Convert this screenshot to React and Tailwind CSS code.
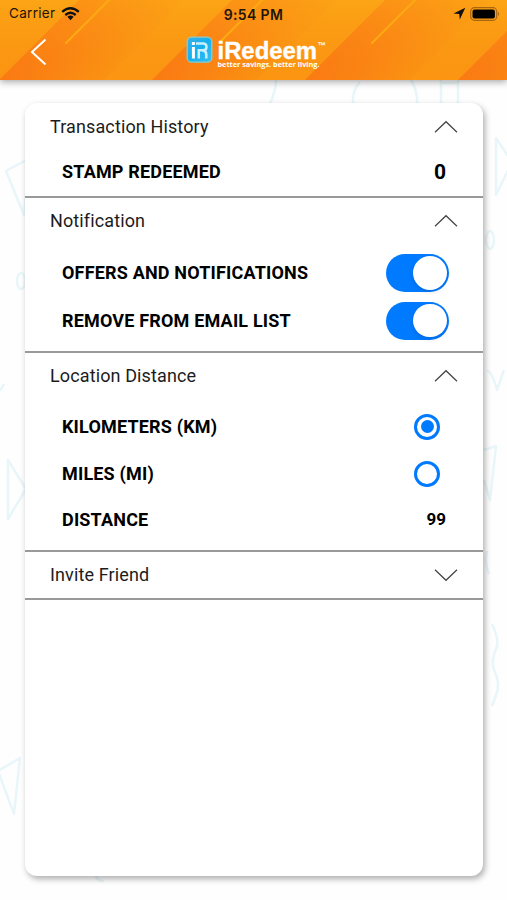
import React, { useState } from 'react';

const Chevron = ({ open }) => (
  <svg width="24" height="14" viewBox="0 0 24 14" fill="none" stroke="#444" strokeWidth="1.2">
    <path d={open ? 'M1 12.3 L12 1.7 L23 12.3' : 'M1 1.7 L12 12.3 L23 1.7'} />
  </svg>
);

const Toggle = ({ on, label, onClick }) => (
  <button
    role="switch"
    aria-checked={on}
    aria-label={label}
    onClick={onClick}
    className={`mr-[0.5px] flex h-[38px] w-[62.5px] items-center rounded-full px-[2px] ${
      on ? 'justify-end bg-[#007aff]' : 'justify-start bg-gray-200'
    }`}
  >
    <span className="h-[33.5px] w-[33.5px] rounded-full bg-white shadow-[0_2px_4px_rgba(0,0,0,0.12)]" />
  </button>
);

const Radio = ({ checked, label, onClick }) => (
  <button
    role="radio"
    aria-checked={checked}
    aria-label={label}
    onClick={onClick}
    className="mr-[9px] flex h-[26px] w-[26px] items-center justify-center rounded-full border-[3px] border-[#007aff]"
  >
    {checked && <span className="h-[13px] w-[13px] rounded-full bg-[#007aff]" />}
  </button>
);

const Section = ({ title, open, onToggle, children }) => (
  <section className="border-b-2 border-[#999999]">
    <button onClick={onToggle} className="flex h-[46px] w-full items-center justify-between px-[25px]">
      <span className="pb-px text-[18px] tracking-[0.12px] text-[#1c1c1c]">{title}</span>
      <Chevron open={open} />
    </button>
    {open && children}
  </section>
);

const Row = ({ label, className, children }) => (
  <div className={`flex items-center justify-between pl-[37px] pr-[34px] ${className}`}>
    <span className="pb-px text-[18px] font-bold tracking-[0.18px] text-black">{label}</span>
    {children}
  </div>
);

const HeaderArt = () => (
  <svg className="absolute inset-0" width="507" height="80" viewBox="0 0 507 80">
    <defs>
      <linearGradient id="band" gradientUnits="userSpaceOnUse" x1="40" y1="40" x2="92" y2="92">
        <stop offset="0" stopColor="#fa7a13" />
        <stop offset="0.45" stopColor="#fa8513" />
        <stop offset="1" stopColor="#fa9812" />
      </linearGradient>
      <linearGradient id="glow" x1="0" y1="0" x2="0" y2="1">
        <stop offset="0" stopColor="#fdae18" stopOpacity="0.5" />
        <stop offset="1" stopColor="#fa7a12" stopOpacity="0.2" />
      </linearGradient>
    </defs>
    <rect width="507" height="80" fill="#fb9c12" />
    {[0, 153, 306, 459].map((x) => (
      <path key={x} d="M-1 80 L79 0 H184 L104 80 Z" fill="url(#band)" transform={`translate(${x} 0)`} />
    ))}
    <rect width="507" height="80" fill="url(#glow)" />
    {[0, 153, 306].map((x) => (
      <path
        key={x}
        d="M66 43 L109 0"
        stroke="#fca912"
        strokeWidth="2.2"
        strokeLinecap="round"
        transform={`translate(${x} 0)`}
      />
    ))}
  </svg>
);

// faint doodles around the card
const Doodles = () => (
  <svg
    className="absolute inset-0"
    width="507"
    height="900"
    viewBox="0 0 507 900"
    fill="none"
    stroke="#e9f6f9"
    strokeWidth="2.5"
    strokeLinejoin="round"
  >
    <path d="M30 158 L6 171 L24 215 Z" />
    <ellipse cx="21" cy="281" rx="4" ry="8" />
    <path d="M0 391 L4 384" />
    <path d="M8 460 L26 489 L8 519 Z" />
    <path d="M-2 771 L20 758 L14 814 Z" />
    <path d="M276 80 Q276 90 270 104" />
    <path d="M360 82 Q352 90 353 104" />
    <path d="M411 80 Q418 92 417 104" />
    <path d="M441 80 V104 M458 80 V104 M441 83 H458" />
    <path d="M496 138 L512 162 L496 195 Z" />
    <ellipse cx="490" cy="240" rx="4" ry="9" />
    <path d="M487 371 Q492 371 497 390 L504 370" />
    <path d="M484 450 L496 446 L490 500 L484 480" />
    <path d="M487 551 Q484 562 489 574" />
    <path d="M492 624 Q500 641 496 649 Q491 660 494 670 Q501 684 496 695 L492 706" />
    <path d="M96 876 Q97 881 104 881" />
  </svg>
);

const StatusBar = () => (
  <div className="grid h-[27px] grid-cols-3 items-center pl-[9px] pr-[7px] text-[13.5px] text-[#221508]">
    <div className="flex items-center gap-[6px]">
      <span className="tracking-[0.3px]">Carrier</span>
      <svg width="19" height="14" viewBox="0 0 19 14" fill="none" stroke="#111" strokeWidth="2.4">
        <path d="M1.2 4.8 Q9.5 -2.2 17.8 4.8" />
        <path d="M4.3 8 Q9.5 3.6 14.7 8" />
        <path d="M6.4 9.8 Q9.5 7.4 12.6 9.8 L9.5 13.2 Z" fill="#111" stroke="none" />
      </svg>
    </div>
    <span className="mr-[2px] pt-px text-center text-[14px] font-semibold tracking-[0.35px]">9:54 PM</span>
    <div className="flex items-center justify-end gap-[4px]">
      <svg width="13" height="13" viewBox="0 0 13 13" fill="#111">
        <path d="M12.3 0.8 L0.5 6.4 L6.2 6.9 L6.8 12.6 Z" />
      </svg>
      <svg width="30" height="14" viewBox="0 0 30 14">
        <rect x="0.7" y="0.7" width="26" height="12.6" rx="3.8" fill="none" stroke="#a8660e" strokeWidth="1.2" />
        <rect x="2.5" y="2.5" width="22.4" height="9" rx="2" fill="#000" />
        <path d="M28 4.8 Q30.2 7 28 9.2 Z" fill="#a8660e" />
      </svg>
    </div>
  </div>
);

const Logo = () => (
  <svg width="146" height="38" viewBox="0 0 146 38" overflow="visible">
    <defs>
      <linearGradient id="tile" x1="0" y1="0" x2="1" y2="1">
        <stop offset="0" stopColor="#3cb0e4" />
        <stop offset="0.5" stopColor="#14b0f0" />
        <stop offset="1" stopColor="#3ac0f2" />
      </linearGradient>
    </defs>
    <rect x="1.2" y="1.2" width="24.6" height="25" rx="4.5" fill="url(#tile)" stroke="#8ccbc8" strokeWidth="1.3" />
    <g fill="none" stroke="#fff">
      <path d="M7.4 11 V22.5" strokeWidth="3" />
      <path d="M7.4 6 V9" strokeWidth="3" />
      <path d="M10 7.5 H17.2 Q20.5 7.5 20.5 10.9 Q20.5 14.3 17.2 14.3 H12.8 V22.5 M16.5 14.6 Q20.3 15 20.3 18.5 V22.5" strokeWidth="2.5" stroke="#c9effc" />
    </g>
    <text
      x="31.5"
      y="22.6"
      textLength="99.5"
      lengthAdjust="spacingAndGlyphs"
      fontFamily="Liberation Sans, sans-serif"
      fontWeight="700"
      fontSize="24"
      fill="#fff"
      stroke="#fff"
      strokeWidth="0.4"
      strokeLinejoin="round"
    >
      iRedeem
    </text>
    <text x="131.5" y="13" textLength="8" lengthAdjust="spacingAndGlyphs" fontFamily="Liberation Sans, sans-serif" fontWeight="700" fontSize="9.5" fill="#fff">
      ™
    </text>
    <text x="31.5" y="31" textLength="102" lengthAdjust="spacingAndGlyphs" fontFamily="Open Sans, sans-serif" fontWeight="700" fontSize="7.3" fill="#fff">
      better savings. better living.
    </text>
  </svg>
);

const App = () => {
  const [open, setOpen] = useState({ history: true, notification: true, distance: true, invite: false });
  const [offers, setOffers] = useState(true);
  const [removeEmail, setRemoveEmail] = useState(true);
  const [unit, setUnit] = useState('km');

  const toggle = (key) => setOpen({ ...open, [key]: !open[key] });

  return (
    <div className="relative flex h-[900px] w-[507px] flex-col overflow-hidden bg-[#fefefe] font-[Roboto,sans-serif]">
      <Doodles />

      {/* Header */}
      <header className="relative mb-[0.5px] h-[79.5px] shrink-0 shadow-[0_2px_7px_rgba(0,0,0,0.35)]">
        <div className="absolute inset-0 overflow-hidden">
          <HeaderArt />
        </div>
        <div className="relative font-[Inter,sans-serif]">
          <StatusBar />
          <div className="flex h-[50px] items-center">
            <button aria-label="Back" className="ml-[30px]">
              <svg width="17" height="28" viewBox="0 0 17 28" fill="none" stroke="#fff" strokeWidth="2">
                <path d="M15.5 1.5 L2 14 L15.5 26.5" />
              </svg>
            </button>
            <div className="ml-[139px] mt-[5px]">
              <Logo />
            </div>
          </div>
        </div>
      </header>

      {/* Settings card */}
      <main className="relative mb-6 ml-[25px] mr-6 mt-[23px] flex-1 rounded-xl bg-white pt-px shadow-[2px_3px_6px_rgba(0,0,0,0.32)]">
        <Section title="Transaction History" open={open.history} onToggle={() => toggle('history')}>
          <Row label="STAMP REDEEMED" className="mb-[2px] h-[44px]">
            <span className="mr-[3px] pt-px text-[21px] font-bold">0</span>
          </Row>
        </Section>

        <Section title="Notification" open={open.notification} onToggle={() => toggle('notification')}>
          <div className="pb-[7px] pt-[5px]">
            <Row label="OFFERS AND NOTIFICATIONS" className="h-[48px]">
              <Toggle on={offers} label="Offers and notifications" onClick={() => setOffers(!offers)} />
            </Row>
            <Row label="REMOVE FROM EMAIL LIST" className="h-[47px]">
              <Toggle on={removeEmail} label="Remove from email list" onClick={() => setRemoveEmail(!removeEmail)} />
            </Row>
          </div>
        </Section>

        <Section title="Location Distance" open={open.distance} onToggle={() => toggle('distance')}>
          <div className="pb-[7px] pt-[4px]">
            <Row label="KILOMETERS (KM)" className="h-[47px]">
              <Radio checked={unit === 'km'} label="Kilometers" onClick={() => setUnit('km')} />
            </Row>
            <Row label="MILES (MI)" className="h-[47px]">
              <Radio checked={unit === 'mi'} label="Miles" onClick={() => setUnit('mi')} />
            </Row>
            <Row label="DISTANCE" className="h-[46px]">
              <span className="mr-[3px] text-[17px] font-bold">99</span>
            </Row>
          </div>
        </Section>

        <Section title="Invite Friend" open={open.invite} onToggle={() => toggle('invite')} />
      </main>
    </div>
  );
};

export default App;
